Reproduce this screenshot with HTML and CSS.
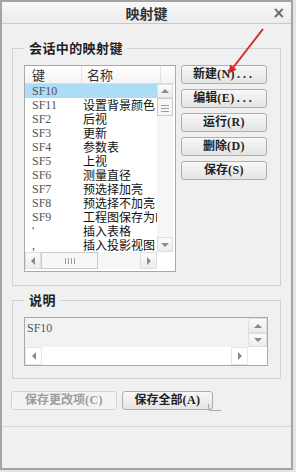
FILE: index.html
```html
<!DOCTYPE html>
<html lang="zh">
<head>
    <meta charset="UTF-8">
    <title>映射键</title>
    <link rel="stylesheet" href="styles.css">
</head>
<body>
    <div class="window">
        <div class="titlebar">
            <span class="title">映射键</span>
            <span class="close">×</span>
        </div>

        <div class="main">
            <fieldset class="group">
                <legend>会话中的映射键</legend>
                <div class="session">
                    <div class="list">
                        <div class="list-head">
                            <span class="col-key">键</span>
                            <span class="col-name">名称</span>
                            <span class="col-end"></span>
                        </div>
                        <div class="list-body">
                            <div class="rows">
                                <div class="row selected"><span class="key">SF10</span><span class="name"></span></div>
                                <div class="row"><span class="key">SF11</span><span class="name">设置背景颜色</span></div>
                                <div class="row"><span class="key">SF2</span><span class="name">后视</span></div>
                                <div class="row"><span class="key">SF3</span><span class="name">更新</span></div>
                                <div class="row"><span class="key">SF4</span><span class="name">参数表</span></div>
                                <div class="row"><span class="key">SF5</span><span class="name">上视</span></div>
                                <div class="row"><span class="key">SF6</span><span class="name">测量直径</span></div>
                                <div class="row"><span class="key">SF7</span><span class="name">预选择加亮</span></div>
                                <div class="row"><span class="key">SF8</span><span class="name">预选择不加亮</span></div>
                                <div class="row"><span class="key">SF9</span><span class="name">工程图保存为DXF</span></div>
                                <div class="row"><span class="key">'</span><span class="name">插入表格</span></div>
                                <div class="row"><span class="key">,</span><span class="name">插入投影视图</span></div>
                            </div>
                            <div class="vscroll">
                                <div class="sb-btn"><i class="tri up"></i></div>
                                <div class="thumb-v"></div>
                                <div class="sb-track"></div>
                                <div class="sb-btn"><i class="tri down"></i></div>
                            </div>
                        </div>
                        <div class="list-foot">
                            <div class="hscroll">
                                <div class="sb-btn"><i class="tri left"></i></div>
                                <div class="thumb-h"></div>
                                <div class="sb-track"></div>
                                <div class="sb-btn"><i class="tri right"></i></div>
                            </div>
                            <div class="corner"></div>
                        </div>
                    </div>

                    <div class="actions">
                        <button class="btn">新建<span class="mn">(N)</span><span class="dots">...</span></button>
                        <button class="btn">编辑<span class="mn">(E)</span><span class="dots">...</span></button>
                        <button class="btn">运行<span class="mn">(R)</span></button>
                        <button class="btn">删除<span class="mn">(D)</span></button>
                        <button class="btn">保存<span class="mn">(S)</span></button>
                    </div>
                </div>
            </fieldset>

            <fieldset class="group desc-group">
                <legend>说明</legend>
                <div class="desc">
                    <div class="desc-text">SF10</div>
                    <div class="desc-vscroll">
                        <div class="sb-btn"><i class="tri up"></i></div>
                        <div class="sb-btn"><i class="tri down"></i></div>
                    </div>
                    <div class="desc-hscroll">
                        <div class="sb-btn"><i class="tri left"></i></div>
                        <div class="sb-track"></div>
                        <div class="sb-btn"><i class="tri right"></i></div>
                    </div>
                    <div class="desc-corner"></div>
                </div>
            </fieldset>

            <div class="bottom-btns">
                <button class="btn disabled">保存更改项<span class="mn">(C)</span></button>
                <button class="btn save-all">保存全部<span class="mn">(A)</span></button>
            </div>
        </div>

        <div class="footer"></div>
    </div>

    <svg class="pointer" width="296" height="472" viewBox="0 0 296 472">
        <line x1="263" y1="29" x2="232" y2="69" stroke="#d22b2b" stroke-width="2"/>
        <polygon points="228,74 236.7,69.4 230.3,64.4" fill="#d22b2b"/>
    </svg>
</body>
</html>
```

FILE: styles.css
```css
* {
    box-sizing: border-box;
    margin: 0;
    padding: 0;
}

body {
    background: #e4e4e4;
    font-family: "Noto Sans CJK SC", sans-serif;
    font-size: 12px;
    color: #222;
    position: relative;
}

.window {
    width: 293px;
    height: 470px;
    border: 2px solid #a3a3a3;
    background: #f0f0f0;
    display: flex;
    flex-direction: column;
}

.titlebar {
    height: 22px;
    border-bottom: 1px solid #c9c9c9;
    background: linear-gradient(#f8f8f8, #ececec);
    display: flex;
    align-items: center;
    justify-content: center;
    position: relative;
}

.title {
    font-size: 14px;
    font-weight: bold;
    color: #333;
    line-height: 20px;
}

.close {
    position: absolute;
    right: 6px;
    top: 1px;
    font-family: "DejaVu Sans", sans-serif;
    font-size: 15px;
    font-weight: bold;
    color: #666;
    line-height: 20px;
}

.main {
    padding: 16px 10px 16px 10px;
}

.group {
    border: 1px solid #d2d2d2;
    padding: 9px 13px 13px 11px;
}

.group legend {
    font-size: 13px;
    font-weight: bold;
    line-height: 16px;
    padding: 0 4px 0 5px;
    color: #222;
    letter-spacing: 0.4px;
}

.session {
    display: flex;
    gap: 5px;
}

/* list box */
.list {
    width: 152px;
    height: 207px;
    border: 1px solid #a9a9a9;
    background: #fff;
    display: flex;
    flex-direction: column;
}

.list-head {
    height: 18px;
    display: flex;
    border-bottom: 1px solid #dcdcdc;
    background: linear-gradient(#ffffff, #f4f4f4);
    font-size: 13px;
    line-height: 17px;
    color: #333;
}

.col-key {
    width: 57px;
    padding-left: 7px;
    border-right: 1px solid #e2e2e2;
}

.col-name {
    width: 79px;
    padding-left: 5px;
    border-right: 1px solid #e2e2e2;
}

.col-end { flex: 1; }

.list-body {
    height: 168px;
    display: flex;
}

.rows {
    width: 132px;
    overflow: hidden;
}

.row {
    height: 14px;
    line-height: 14px;
    display: flex;
    white-space: nowrap;
}

.row.selected { background: #addcf6; }

.key {
    width: 57px;
    flex: none;
    padding-left: 7px;
    font-family: "Liberation Serif", serif;
    font-size: 12px;
    color: #555;
}

.name {
    padding-left: 1px;
    color: #111;
}

.vscroll {
    width: 16px;
    background: #f6f6f6;
    display: flex;
    flex-direction: column;
}

.vscroll .sb-btn { height: 14px; }
.vscroll .sb-btn:last-child { height: 15px; }

.sb-btn {
    border: 1px solid #dedede;
    background: linear-gradient(#fbfbfb, #ececec);
    display: flex;
    align-items: center;
    justify-content: center;
}

.sb-track { flex: 1; }

.thumb-v {
    height: 18px;
    border: 1px solid #c9c9c9;
    background: #f7f7f7 repeating-linear-gradient(#f7f7f7 0 2px, #9c9c9c 2px 3px) 3px 4px / 8px 9px no-repeat;
}

.tri {
    width: 0;
    height: 0;
    display: block;
}

.tri.up { border-left: 4px solid transparent; border-right: 4px solid transparent; border-bottom: 4px solid #8a8a8a; }
.tri.down { border-left: 4px solid transparent; border-right: 4px solid transparent; border-top: 4px solid #8a8a8a; }
.tri.left { border-top: 4px solid transparent; border-bottom: 4px solid transparent; border-right: 4px solid #8a8a8a; }
.tri.right { border-top: 4px solid transparent; border-bottom: 4px solid transparent; border-left: 4px solid #8a8a8a; }

.list-foot {
    height: 17px;
    display: flex;
}

.hscroll {
    width: 132px;
    display: flex;
    background: #f6f6f6;
}

.hscroll .sb-btn { width: 16px; }
.hscroll .sb-btn:last-child { width: 17px; }

.thumb-h {
    width: 57px;
    border: 1px solid #c9c9c9;
    background: #f7f7f7 repeating-linear-gradient(90deg, #f7f7f7 0 2px, #9c9c9c 2px 3px) 21px 5px / 12px 6px no-repeat;
}

.corner {
    width: 16px;
    background: #fff;
}

/* buttons */
.actions {
    width: 86px;
    display: flex;
    flex-direction: column;
    gap: 5px;
}

.btn {
    height: 19px;
    border: 1px solid #adadad;
    border-radius: 3px;
    background: linear-gradient(#f8f8f8, #e4e4e4);
    font-family: "Liberation Serif", "Noto Sans CJK SC", serif;
    font-size: 12px;
    font-weight: bold;
    line-height: 17px;
    color: #222;
    text-align: center;
}

.mn { letter-spacing: 0.5px; }
.dots { letter-spacing: 3px; margin-left: 2px; }

/* description */
.desc-group {
    margin-top: 6px;
    padding: 9px 12px 12px 11px;
}

.desc {
    width: 244px;
    height: 49px;
    border: 1px solid #a9a9a9;
    display: grid;
    grid-template-columns: 1fr 19px;
    grid-template-rows: 29px 18px;
}

.desc-text {
    background: #f2f2f2;
    padding: 3px 2px;
    font-family: "Liberation Serif", serif;
    font-size: 12px;
    line-height: 14px;
    color: #555;
}

.desc-vscroll {
    display: flex;
    flex-direction: column;
    background: #f2f2f2;
}

.desc-vscroll .sb-btn { height: 15px; }
.desc-vscroll .sb-btn:last-child { height: 14px; }

.desc-hscroll {
    display: flex;
    background: #fff;
}

.desc-hscroll .sb-btn {
    width: 17px;
    background: #fff;
    border-color: #e6e6e6;
}

.desc-corner { background: #fff; }

.bottom-btns {
    display: flex;
    gap: 5px;
    margin-top: 12px;
    margin-left: -1px;
}

.bottom-btns .btn:first-child { width: 106px; }

.btn.disabled {
    color: #9c9c9c;
    background: #f3f3f3;
    border-color: #d3d3d3;
}

.btn.save-all {
    width: 91px;
    position: relative;
}

.btn.save-all::after {
    content: "";
    position: absolute;
    right: -9px;
    bottom: -2px;
    width: 12px;
    height: 6px;
    border-left: 1px solid #a8a8a8;
    border-bottom: 1px solid #a8a8a8;
    border-bottom-left-radius: 3px;
}

.footer {
    flex: 1;
    border-top: 1px solid #d6d6d6;
}

.pointer {
    position: absolute;
    left: 0;
    top: 0;
    pointer-events: none;
}
```
